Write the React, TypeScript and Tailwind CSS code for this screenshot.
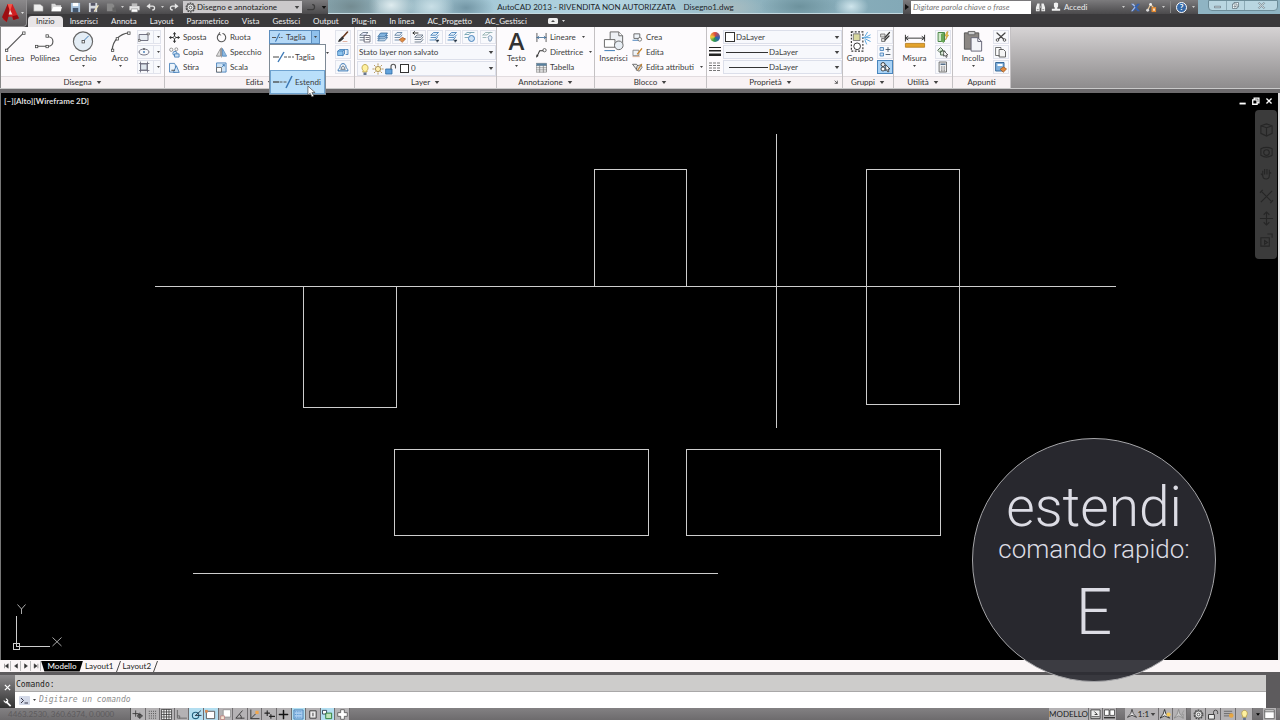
import type { ReactNode } from "react";

const P = ({ d, c = "#555", f = "none", w = 1 }: { d: string; c?: string; f?: string; w?: number }) => (
  <path d={d} stroke={c} fill={f} strokeWidth={w} strokeLinecap="round" strokeLinejoin="round" />
);

const B = "#3b78b5";
const L = "#cfe3f5";

const art: Record<string, ReactNode> = {
  rect: <><P d="M1.500 3.500h8.500v6H1.500z" c="#667" f="#e8edf2" w={0.9} /><P d="M.5 8.500h1.800v1.800H.5zM9.500 2h1.800v1.800H9.500z" f="#fff" w={0.7} /></>,
  ellipse: <><ellipse cx="6" cy="6" rx="5" ry="3" fill="none" stroke="#667" strokeWidth=".9" /><circle cx="6" cy="6" r=".9" fill={B} /><circle cx="6" cy="3" r=".9" fill="#555" /></>,
  hatch: <><P d="M3 3h6v6H3z" c="#667" f="#dfe6ee" w={0.8} /><P d="M1.500 2.500h9.500M1.500 9.500h9.500M2.500 1v10M9.500 1v10" c="#667" w={0.8} /></>,
  move: <><P d="M6 1v10M1 6h10" c="#333" w={1.1} /><path d="M6 0l1.900 2.400H4.100zM6 12l1.900-2.400H4.100zM0 6l2.400-1.900v3.800zM12 6L9.600 4.100v3.800z" fill="#333" /><path d="M4.800 4.800h2.400v2.400H4.800z" fill="#fff" stroke="#555" strokeWidth=".7" /></>,
  rotate: <><P d="M7.500 1.700A4.600 4.600 0 1 1 3.500 2.200" c="#555" w={1.2} /><P d="M4 .5l-.8 2 2 .8" c="#555" /></>,
  copy: <><circle cx="2.500" cy="3" r="1.800" fill="none" stroke="#777" strokeWidth=".8" /><circle cx="8" cy="2.500" r="1.600" fill="none" stroke="#777" strokeWidth=".8" /><circle cx="6.500" cy="7" r="2.300" fill={L} stroke={B} strokeWidth=".9" /><P d="M6.500 7.500h4.500V11H6.500z" c={B} f={L} w={0.9} /></>,
  mirror: <><P d="M5 2v8H.8z" c="#777" f="#ddd" w={0.8} /><P d="M7 2v8h4.200z" c={B} f="#8fb9e0" w={0.8} /><P d="M6 1v10" c="#555" w={0.6} /></>,
  stretch: <><P d="M1 1.500h5l1 2v7.500H1z" c={B} f="#eef5fc" w={0.9} /><P d="M5 11l3-7 3 7z" c={B} f={L} w={0.9} /><P d="M3 9h3" c="#444" /></>,
  scale: <><P d="M1 1h10v10H1z" c={B} f={L} w={0.9} /><P d="M1 6h5v5H1z" c="#666" f="#fff" w={0.9} /><P d="M7 5l2-2M7.500 3H9v1.500" c={B} /></>,
  trim: <><P d="M0 6h4" c="#555" w={1.2} /><P d="M4 10l4-8" c={B} w={1.2} /><path d="M7.500 6H12" stroke="#555" strokeDasharray="1.500 1" /></>,
  erase: <><P d="M10.500 1L5.500 6.500" c="#6a3a20" w={1.6} /><P d="M5.500 6l1 1.500-3 2.500-2 .5 1-2z" c="#222" f="#333" w={0.7} /><P d="M6 10.500h4" c="#d9a08a" w={0.8} /></>,
  explode: <><P d="M1 5h5v4.500H1zM1 5l1.500-1.500h5L6 5M7.500 3.500V8L6 9.500" c={B} f="#8cc4ee" w={0.8} /><P d="M8.500 3.500h2.500v5H9" c={B} f={L} w={0.8} /></>,
  offset: <><P d="M1 9.500c0-2 2-2 2-3.500 0-4.500 6-4.500 6 0 0 1.500 2 1.500 2 3.500z" c={B} w={1} /><P d="M4 8c1-1 .5-3 2-3s1 2 2 3z" c="#456" w={0.8} /></>,
  layers: <><P d="M1 4l3-2.500h5L6.500 4zM1 6.500h5.500M1 9h5" c="#567" f="#eef" w={0.8} /><P d="M5.500 4.500H11v6.500H5.500zM7 6.500h3M7 8.500h3" c="#556" f="#fff" w={0.8} /></>,
  layerStack: <><P d="M1 9.500l2.500-3h7L8 9.500z" c="#245c92" f="#dceaf6" w={0.7} /><P d="M1 7.500l2.500-3h7L8 7.500z" c="#245c92" f="#b6d4ee" w={0.7} /><P d="M1 5.500L3.500 2h7L8 5.500z" c="#245c92" f="#82b4df" w={0.7} /></>,
  layerMatch: <><P d="M1 4l2-2.500h5L6 4zM1 6.500h5L8 4M1 9h4" c="#579" f="#e6eef8" w={0.8} /><P d="M5.500 8.500l3-2 3 1.500-3 3z" c="#a5531f" f="#df8b3d" w={0.8} /></>,
  layerPrev: <><P d="M3 6l2-2h6L9 6zM3 8.500h6L11 6M3 11h6l2-2.500" c="#567" f="#f4f6fa" w={0.8} /><P d="M1 2h5M2.500.5L1 2l1.500 1.500" c="#222" w={0.9} /></>,
  layerIso: <><P d="M2 4l2.500-2.500h5L7 4zM2 6.500h5L9.500 4M1 9h5l2.500-2.500" c={B} f="#dcecfa" w={0.8} /><P d="M7 9h3l-1.500 2z" c="#234" f="#234" w={0.5} /></>,
  layerFreeze: <><P d="M1 3.500h4l2-2M1 6.500h3M1 3.500l2-2h7" c="#69a" w={0.8} /><circle cx="7.500" cy="7.500" r="3" fill={L} stroke={B} strokeWidth=".9" /></>,
  layerOff: <><P d="M1 4h4l3-2.500M1 4l2.500-2.500H10M1 6.500h3" c="#8aa" w={0.8} /><P d="M6 6.500a2 2 0 1 1 3.500 1.500L9 10H7L6.800 8z" c="#6788a8" f="#e8f1fa" w={0.8} /></>,
  linear: <><P d="M1 1.500v9M11 1.500v9" c="#555" /><P d="M1 6h10M3 4.500L1.500 6 3 7.500M9 4.500L10.500 6 9 7.500" c="#3c6a94" w={0.9} /></>,
  leader: <><P d="M1 10.500L4 4h3.500" c="#333" w={1.1} /><circle cx="9.300" cy="3.500" r="1.800" fill="none" stroke="#555" /><P d="M.5 11l.3-2.500 1.500.8z" c="#333" f="#333" w={0.4} /></>,
  table: <><P d="M.5 1.500h11v9.500H.5zM.5 4h11M.5 6.300h11M.5 8.600h11M4 4v7M8 4v7" c="#777" f="#fff" w={0.8} /><path d="M.5 1.500h11V4H.5z" fill="#59809f" /></>,
  blockNew: <><P d="M2.500 2h6v5h-6z" c="#555" f="#eef3f8" w={0.9} /><P d="M1 9h6" c={B} /><circle cx="8.500" cy="8" r="2" fill="#fff" stroke="#555" strokeWidth=".8" /></>,
  blockEdit: <><P d="M1.500 3.500h6v6h-6z" c="#777" f="#eef3f8" w={0.9} /><P d="M10.500 2L6 7.500" c="#c9842b" w={1.500} /><P d="M1 10.500h7" c="#c97" w={0.8} /></>,
  attrs: <><P d="M1 2.500h4l2 2.500-2 2.500z" c="#555" f="#eee" w={0.9} /><P d="M6 4l4-1 1 3-3 4-3-1z" c="#555" f="#ddd" w={0.8} /><P d="M10.500 2.500L6.500 8.500" c="#c9842b" w={1.300} /></>,
  weights: <path d="M0 1h12v1H0zM0 4h12v1.600H0zM0 7.500h12V10H0z" fill="#222" />,
  types: <path d="M0 2h12M0 4.500h12M0 7h12M0 9.500h12" stroke="#777" strokeDasharray="3 1" strokeWidth="1" />,
  ungroup: <><P d="M2 3h4v3H2zM3 7.500h3v3H3z" c="#666" f="#ddd" w={0.8} /><P d="M10.500 1.500L6 6.500M10 5L6 9" c="#333" w={1.200} /></>,
  groupEdit: <><P d="M1.500 1.500h3v3h-3zM1.500 7h3v3h-3z" c={B} f={L} w={0.8} /><P d="M7 3.500h4M9 1.500v4M7 8.500h4" c="#345" w={0.8} /></>,
  groupSel: <><circle cx="4" cy="3.500" r="2" fill="#eee" stroke="#222" strokeWidth=".8" /><circle cx="4" cy="8" r="2" fill="#fff" stroke="#222" strokeWidth=".8" /><P d="M7 4l4 4H9l1 2.500-1.200.5-1-2.500L7 9.500z" c="#222" f="#fff" w={0.7} /></>,
  quick: <><P d="M1.500 1.500h6v9h-6z" c="#3a7a35" f="#cfe8c8" w={0.9} /><path d="M4 3l3-1.500V12L4 10.500z" fill="#69a857" /><P d="M9.800 1L8 5h1.500l-1 4 3-5H10l1-3z" c="#b8892a" f="#f6d04b" w={0.6} /></>,
  selectSim: <><P d="M1 4l2.500-2.500L6 4 3.500 6.500zM4 5h4v4H4z" c="#456045" f="#dbe9d8" w={0.9} /><P d="M7 5l4 4H9.300l.8 2-1 .4-.8-2L7 10z" c="#333" f="#fff" w={0.7} /></>,
  calc: <><P d="M2.500 1h7v10h-7z" c="#666" f="#eee" w={0.9} /><path d="M3.500 2.500h5V4h-5z" fill="#556f8a" /><path d="M4 6h4M4 8h4M4 9.800h4" stroke="#777" strokeDasharray="1 .5" /></>,
  cut: <><P d="M2 2l6.500 6M10 2L3.500 8" c="#444" w={1.200} /><circle cx="2.500" cy="9" r="1.300" fill="none" stroke="#555" /><circle cx="9.500" cy="9" r="1.300" fill="none" stroke="#555" /></>,
  clip: <><P d="M1 1.500h5v8H1z" c="#555" f="#fff" w={0.8} /><P d="M4.500 3.500h4l2 2V11h-6z" c="#555" f="#f5f5f5" w={0.9} /></>,
  matchProp: <><P d="M1 1.500h8V10H1z" c="#2a5d91" f="#7fb0dc" w={0.9} /><path d="M2.500 3h5v2h-5z" fill="#fff" /><P d="M5.500 8l3-2 3 2-3 3z" c="#a3561b" f="#e3893a" w={0.8} /></>,
  bulb: <><P d="M4 7.500C2 5.500 3 1.500 6 1.500s4 4 2 6v1.500H4z" c="#b59a3c" f="#fff1a0" w={0.8} /><path d="M4.500 9.500h3V12h-3z" fill="#66758c" /></>,
  sun: <><circle cx="6" cy="6" r="2.600" fill="#fff1b0" stroke="#a58a4a" strokeWidth=".9" /><P d="M6 .8v1.400M6 9.800v1.400M.8 6h1.400M9.800 6h1.400M2.300 2.300l1 1M8.700 8.700l1 1M9.700 2.300l-1 1M2.300 9.700l1-1" c="#b09050" w={0.9} /></>,
  lock: <><P d="M1 6h6v5H1z" c="#2c6ba5" f="#63a3dc" w={0.8} /><P d="M6 6V3.500a2 2 0 0 1 4.500 0V5" c="#555" w={1.100} /></>,
  newFile: <path d="M.8 2.500h7l3.200 2.500v5H.8z" fill="#eee" stroke="#888" strokeWidth=".5" />,
  open: <><path d="M.5 2h4l1 1.500H11V10H.5z" fill="#d9d9d9" /><path d="M2.500 5.500H12L10.500 10H.5z" fill="#fff" /></>,
  save: <><path d="M1 1h10v10H1z" fill="#a9c3dc" /><path d="M3 1h6v3.500H3z" fill="#fff" /><path d="M3 6.500h6V11H3z" fill="#44566c" /></>,
  saveAs: <><path d="M1 1h9v10H1z" fill="#d5d9de" /><path d="M3 1h5v3H3zM3 7h5v4H3z" fill="#556" /><P d="M11 4L7 10" c="#f1e5bd" w={1.400} /></>,
  cloud: <><path d="M1 1.500h6l2 2V10H1z" fill="#888" /><path d="M7 6h4v5H7z" fill="#626262" /></>,
  print: <><path d="M.5 4.500h11v4.500H.5z" fill="#e6e6e6" /><path d="M3 1.500h6v3H3z" fill="#bbb" /><path d="M2.500 7.500h7V11h-7z" fill="#fff" stroke="#777" strokeWidth=".6" /></>,
  undo: <><P d="M3 5h5c3 0 3 4.500 0 4.500" c="#e6e6e6" w={1.600} /><path d="M5 1.500v7L.5 5z" fill="#e6e6e6" /></>,
  redo: <><P d="M9 5H4C1 5 1 9.500 4 9.500" c="#e6e6e6" w={1.600} /><path d="M7 1.500v7L11.500 5z" fill="#e6e6e6" /></>,
  gear: <><circle cx="6" cy="6" r="4.800" fill="none" stroke="#444" strokeWidth="1.200" strokeDasharray="1.900 1.100" /><circle cx="6" cy="6" r="3.800" fill="#eee" stroke="#444" strokeWidth=".9" /><circle cx="6" cy="6" r="1.500" fill="#fff" stroke="#444" strokeWidth=".9" /></>,
  binoc: <><path d="M1 10V6l1.500-4.500h2.500V10zM11 10V6L9.500 1.500H7V10z" fill="#eee" /><path d="M5 4h2v2.500H5zM2 7.500h2V9H2zM8 7.500h2V9H8z" fill="#999" /></>,
  person: <path d="M3.500 1.500q2.500-2 5 0v4L7.500 7v1h3.500v2.500H1V8h3.500V7l-1-1.500z" fill="#f1f1f1" />,
  exchange: <><path d="M0 1h3.500L6 4l2.500-3H12L8 6l4 5H8.500L6 8l-2.500 3H0l4-5z" fill="#3461b0" /><path d="M0 1h3.500l2 2.500L4 6 0 11h2l4-5z" fill="#a9bbe0" /></>,
  share: <><P d="M1.800 9L5 2.500 8 6" c="#e8c79a" w={1.300} /><circle cx="5" cy="2.500" r="1.500" fill="#f0f0f0" /><circle cx="1.800" cy="9" r="1.600" fill="#ddd" /><path d="M6 5.500h5V11H6z" fill="#e28a32" /><path d="M8 7h1.500v2.500H8z" fill="#fff" /></>,
  snap: <P d="M1 5h6M4 2v6M7 6h3v3H7zM8.500 4.500v6M6 7.500h6" c="#333" w={0.9} />,
  dots: <path d="M2 2.500h8M2 5h8M2 7.500h8M2 10h8" stroke="#444" strokeDasharray="1 1.300" />,
  grid: <><path d="M.5.500h11v11H.5z" fill="#eee" /><path d="M.5.500h11v11H.5zM3.200.5v11M6 .5v11M8.700.5v11M.5 3.200h11M.5 6h11M.5 8.700h11" fill="none" stroke="#333" strokeWidth=".8" /></>,
  ortho: <P d="M1.500 1.500v8.500h10M1.500 7.500H4V10" c="#666" />,
  polar: <><circle cx="5" cy="7" r="3.500" fill="none" stroke="#23617e" strokeWidth="1.200" /><P d="M5 7l5.500-5M5 7h6" c="#234" /></>,
  osnap: <><path d="M1.500 2.500h9v8h-9z" fill="#fff" stroke="#555" /><path d="M0 1h3v3H0z" fill="#d98c55" /></>,
  cube: <><path d="M3.500.8h8v8h-8z" fill="#fff" stroke="#888" strokeWidth=".8" /><path d="M.8 7.500h4v4h-4z" fill="#f6e7d5" stroke="#b77" strokeWidth=".8" /></>,
  angle: <P d="M9 2L2 10h9M6.500 6q2 1.500 1.500 4" c="#333" />,
  ducs: <><P d="M2 1v9.500h9M2 10.500l5-5" c="#333" /><path d="M7 2h3.500v3.500H7z" fill="#f1a64b" /></>,
  dyn: <P d="M1 4.500h5M3.500 2v5M6 8h5.500M7.500 6v4" c="#222" w={1.200} />,
  plus: <P d="M6 1.500v9M1.500 6h9" c="#111" w={1.600} />,
  transp: <><path d="M1 1h10v10H1z" fill="#a9cdf0" stroke="#2c69a5" strokeWidth=".8" /><path d="M2 3h8M2 6h8M2 9h8" stroke="#5996cf" strokeDasharray="1.500 1" /></>,
  qp: <><path d="M3 2h7v8H3z" fill="#eee" stroke="#333" strokeWidth="1" /><path d="M6 4h1v4H6z" fill="#333" /></>,
  cycle: <><P d="M1 1.500h4v4H1z" c="#345" f="#fff" /><P d="M4.500 4.500h6v6h-6z" c="#2a7b35" f="#bfe5ba" /></>,
  cross: <path d="M4 .8h4V4h3.200v4H8v3.200H4V8H.8V4H4z" fill="#fff" stroke="#555" strokeWidth=".9" />,
  modelIcon: <><path d="M1 1h10v9.500H1z" fill="#eee" stroke="#333" strokeWidth=".9" /><P d="M5 3l3 3H5.500M2 8.500h8" c="#333" /></>,
  qview: <><path d="M.5 1h5v6h-5zM6.500 1h5v6h-5z" fill="#fff" stroke="#333" strokeWidth=".8" /><path d="M0 9.500h12" stroke="#333" strokeWidth="1.500" /></>,
  anno: <path d="M6 .5l1.500 5 4 4.500-5.500-2.500L.5 10l4-4.500z" fill="#eee" stroke="#222" strokeWidth=".9" />,
  annoBulb: <><path d="M5 .5l1.500 5 4 4.500L5 7.500 0 10l3.500-4.500z" fill="#eee" stroke="#222" strokeWidth=".9" /><circle cx="9.300" cy="6" r="2.300" fill="#f5c959" /></>,
  annoAuto: <><path d="M5 .5l1.500 5 4 4.500L5 7.500 0 10l3.500-4.500z" fill="#ccc" stroke="#888" strokeWidth=".9" /><P d="M10.500 2L8.500 6h2l-1 4" c="#999" /></>,
  lockOpen: <><P d="M1 6h6v5H1z" c="#333" f="#eee" /><P d="M6 6V3.500a2 2 0 0 1 4.500 0V5" c="#444" /></>,
  hw: <><path d="M1 2.500h9M1 5h9M1 7.500h6" stroke="#666" /><circle cx="9" cy="7" r="2.500" fill="#e7a641" /></>,
  full: <path d="M.8 1h10.400v9.500H.8zM.8 3h10.400" fill="#fff" stroke="#666" />,
};

function Icon({ n, s = "size-3" }: { n: string; s?: string }) {
  return <svg viewBox="0 0 12 12" className={`${s} shrink-0`} aria-hidden="true">{art[n]}</svg>;
}

function Down({ c = "text-[#444]", s = "w-[6px] h-[3px]" }: { c?: string; s?: string }) {
  return <svg viewBox="0 0 6 4" className={`${s} ${c} shrink-0`} aria-hidden="true"><path d="M0 0h6L3 4z" fill="currentColor" /></svg>;
}
const TinyDown = ({ c = "text-[#444]" }: { c?: string }) => <Down s="w-[3px] h-[2px]" c={c} />;

function Panel({ title, w, children, arrow = true, launcher = false }: { title: string; w: string; children: ReactNode; arrow?: boolean; launcher?: boolean }) {
  return (
    <section className={`${w} flex shrink-0 flex-col border-r border-[#c4c1c3] bg-[#fdfbfd]`}>
      <div className="flex h-[49px] pt-[3px]">{children}</div>
      <div className="flex h-3 items-center border-t border-[#e2dcdf] bg-[#f8f2f4] pb-px">
        <button className="flex flex-1 items-center justify-center gap-1 text-[#333]">{title}{arrow && <Down />}</button>
        {launcher && <svg viewBox="0 0 6 6" className="mr-1 size-1"><path d="M1 1l4 4M5 1v4H1" stroke="#222" fill="none" /></svg>}
      </div>
    </section>
  );
}

function Big({ label, w, arrow = false, children }: { label: string; w: string; arrow?: boolean; children: ReactNode }) {
  return (
    <button className={`${w} flex shrink-0 flex-col items-center`}>
      <svg viewBox="0 0 24 24" className="h-[23px] w-6" aria-hidden="true">{children}</svg>
      <span className="h-[11px] leading-[11px]">{label}</span>
      {arrow && <span className="flex h-1 items-center"><TinyDown /></span>}
    </button>
  );
}

function Row({ n, label, arrow = false }: { n: string; label: string; arrow?: boolean }) {
  return (
    <button className="flex h-[15px] items-center gap-[3px] whitespace-nowrap pb-px">
      <Icon n={n} s="size-[11px]" />
      <span>{label}</span>
      {arrow && <span className="ml-[3px]"><TinyDown /></span>}
    </button>
  );
}

function Boxed({ n, label, on = false, arrow = false }: { n: string; label: string; on?: boolean; arrow?: boolean }) {
  return (
    <button aria-label={label} className={`flex h-[14px] items-center justify-center border ${arrow ? "w-6 gap-[3px]" : "w-4"} ${on ? "border-[#4a86bd] bg-[#a9d3f6]" : "border-[#e1e3ec] bg-[#f8f9fc]"}`}>
      <Icon n={n} />
      {arrow && <span className="flex h-full items-center border-l border-[#e1e3ec] pl-[3px]"><TinyDown /></span>}
    </button>
  );
}

function Combo({ label, value, pad, children }: { label: string; value: string; pad: string; children?: ReactNode }) {
  return (
    <div className="relative flex h-[14px] flex-1 items-center border border-[#dcdfea] bg-[#f7f8fc]">
      <select aria-label={label} className={`h-full w-full appearance-none bg-transparent ${pad} pb-px outline-none`}><option>{value}</option></select>
      <span className="pointer-events-none absolute inset-y-0 left-px flex items-center">{children}</span>
      <span className="pointer-events-none absolute inset-y-0 right-px flex items-center"><Down /></span>
    </div>
  );
}

function TitleBar() {
  const qat = ["newFile", "open", "save", "saveAs", "cloud"];
  const names = ["Nuovo", "Apri", "Salva", "Salva con nome", "Cloud"];
  return (
    <div className="flex h-[14px] items-stretch bg-[#8fb4c3]">
      <div className="flex w-[301px] shrink-0 items-center bg-linear-to-b from-[#7c7b7d] to-[#4b4a4c]">
        <div className="flex w-[90px] items-center justify-between pl-[6px]">
          {qat.map((q, i) => <button key={q} aria-label={names[i]}><Icon n={q} s="size-[11px]" /></button>)}
        </div>
        <div className="flex w-[64px] items-center justify-between pl-1 pr-[2px]">
          <TinyDown c="text-[#ccc]" />
          <button aria-label="Stampa"><Icon n="print" s="size-[11px]" /></button>
          <button aria-label="Annulla"><Icon n="undo" s="size-[10px]" /></button>
          <TinyDown c="text-[#ccc]" />
          <button aria-label="Ripeti"><Icon n="redo" s="size-[10px]" /></button>
        </div>
        <div className="relative ml-[2px] flex h-3 w-[119px] items-center bg-[#cbc9cb]">
          <span className="pointer-events-none absolute left-[2px]"><Icon n="gear" s="size-[11px]" /></span>
          <select aria-label="Area di lavoro" className="w-full appearance-none bg-transparent pl-[14px] text-[#222]"><option>Disegno e annotazione</option></select>
          <span className="pointer-events-none absolute right-[2px]"><Down /></span>
        </div>
        <svg viewBox="0 0 12 12" className="ml-1 size-[10px]"><P d="M2 9h6c3 0 3-6 0-6" c="#3b3b3b" w={1.500} /></svg>
        <span className="ml-[5px]"><Down c="text-[#111]" /></span>
      </div>
      <div className="flex min-w-0 flex-1 items-center justify-center overflow-hidden border-b border-[#c3d9e0] bg-[radial-gradient(ellipse_5%_120%_at_4%_50%,#738b91,transparent),radial-gradient(ellipse_4%_120%_at_11%_40%,#dfecef,transparent),radial-gradient(ellipse_4%_120%_at_18%_50%,#c9dfe6,transparent),radial-gradient(ellipse_5%_120%_at_24%_60%,#7396a5,transparent),radial-gradient(ellipse_6%_110%_at_70%_60%,#a9bcc0,transparent),radial-gradient(ellipse_7%_120%_at_82%_50%,#6d929d,transparent),radial-gradient(ellipse_3%_90%_at_91%_50%,#cfe5ec,transparent),linear-gradient(90deg,#86a3ac,#a6cad8_28%,#b4d5e2_50%,#8eb2be_75%,#83a9b7)] whitespace-pre text-[#1d2529]">
        AutoCAD 2013 - RIVENDITA NON AUTORIZZATA    Disegno1.dwg
      </div>
      <div className="flex w-[295px] shrink-0 items-center bg-linear-to-b from-[#7c7b7d] to-[#4b4a4c] text-[#eee]">
        <button aria-label="Espandi" className="flex w-2 justify-center"><svg viewBox="0 0 4 6" className="h-[6px] w-1"><path d="M0 0l4 3-4 3z" fill="#111" /></svg></button>
        <input aria-label="Ricerca" placeholder="Digitare parola chiave o frase" className="h-[13px] w-[120px] bg-white px-[2px] italic outline-none placeholder:text-[#777]" />
        <button aria-label="Cerca" className="ml-1"><Icon n="binoc" s="size-[11px]" /></button>
        <button className="ml-[5px] flex items-center gap-[3px]"><Icon n="person" s="size-[10px]" />Accedi</button>
        <div className="ml-auto flex items-center gap-[5px] pr-[3px]">
          <TinyDown c="text-[#ccc]" />
          <button aria-label="Exchange" className="px-px"><Icon n="exchange" s="size-[9px]" /></button>
          <button aria-label="Condividi"><Icon n="share" s="size-[11px]" /></button>
          <TinyDown c="text-[#ccc]" />
          <span className="h-3 w-px bg-[#888]" />
          <button aria-label="Guida" className="flex size-[11px] items-center justify-center rounded-full border border-white bg-[#3569a8] font-bold text-white">?</button>
          <TinyDown c="text-[#ccc]" />
        </div>
      </div>
      <div className="flex w-[82px] shrink-0 items-start justify-end pr-[2px]">
        <div className="flex h-[11px] w-[70px] rounded-b border border-[#6d8d99] bg-[#b9d6e1]">
          {["M2 7h8v2H2z", "M2 4h6v6H2zM4 4V2h6v6H8M4 6.500h2v1.500H4z", "M3 2l3 3 3-3 1 1-3 3 3 3-1 1-3-3-3 3-1-1 3-3-3-3z"].map((d, i) => (
            <button key={d} aria-label={["Riduci a icona", "Ripristina", "Chiudi"][i]} className={`flex items-center justify-center ${i === 2 ? "w-8" : "flex-1 border-r border-[#8ba9b5]"}`}>
              <svg viewBox="0 0 12 12" className="size-[9px]"><path d={d} fill="#f5fafc" stroke="#536670" strokeWidth=".9" /></svg>
            </button>
          ))}
        </div>
      </div>
    </div>
  );
}

const tabs = ["Inizio", "Inserisci", "Annota", "Layout", "Parametrico", "Vista", "Gestisci", "Output", "Plug-in", "In linea", "AC_Progetto", "AC_Gestisci"];

function Header() {
  return (
    <header className="flex bg-[#3a393b]">
      <button aria-label="Menu applicazione" className="flex h-[27px] w-[27px] shrink-0 items-center gap-[2px] rounded-br border-b border-r border-[#939193] bg-linear-to-b from-[#8b898b] to-[#5b595b] pl-[2px]">
        <svg viewBox="0 0 18 22" className="h-[21px] w-[17px]">
          <path d="M6 1h5l7 15-6 2-1.500-3.500H6.500L5 20l-4-3z" fill="#d01f22" />
          <path d="M6 1L0 15l5 5 3.500-11z" fill="#9c0e12" />
          <path d="M6 1h5l-2.500 8z" fill="#f4574a" />
          <path d="M8.500 7l2.500 5H7z" fill="#f6d9d6" />
          <path d="M12 18l6-2-2-3.500-5 1.500z" fill="#8f0b10" />
        </svg>
        <TinyDown c="text-[#ddd]" />
      </button>
      <div className="min-w-0 flex-1">
        <TitleBar />
        <nav className="flex h-[13px] items-end gap-px text-[#f0f0f0]">
          {tabs.map((t, i) => (
            <button key={t} className={i === 0 ? "ml-px h-[11px] rounded-t-sm bg-[#e8e5e7] px-2 leading-[11px] text-[#333]" : "h-[12px] px-[6px] leading-[11px]"}>{t}</button>
          ))}
          <button aria-label="Riduci barra" className="ml-[14px] flex h-3 items-center gap-1">
            <svg viewBox="0 0 10 6" className="h-[6px] w-[10px]"><rect width="10" height="6" rx="1.500" fill="#eee" /><path d="M3 4l2-2 2 2z" fill="#444" /></svg>
            <TinyDown c="text-[#ddd]" />
          </button>
        </nav>
      </div>
    </header>
  );
}

function TrimMenu() {
  return (
    <div className="relative h-[14px] w-[51px]">
      <div className="flex h-[14px] border border-[#5c8dbd] bg-[#b5d9f7]">
        <button className="flex flex-1 items-center gap-[3px] pl-[2px]"><Icon n="trim" s="size-[11px]" />Taglia</button>
        <button aria-label="Altre opzioni" className="flex w-2 items-center justify-center border-l border-[#5c8dbd] bg-[#8fc1ec]"><TinyDown /></button>
      </div>
      <div role="menu" className="absolute left-0 top-[14px] z-20 w-[57px] border border-[#7e8a96] bg-white">
        <button role="menuitem" className="flex h-[25px] w-full items-center gap-px pb-px pl-[2px]">
          <svg viewBox="0 0 22 16" className="h-4 w-[22px]"><path d="M1 8h6" stroke="#444" /><path d="M6 13L12 3" stroke={B} strokeWidth="1.400" /><path d="M12 8h10" stroke="#555" strokeDasharray="3 1" /></svg>Taglia
        </button>
        <button role="menuitem" className="flex h-6 w-full items-center gap-px border border-[#6fa3d0] bg-[#b9dffa] pl-px">
          <svg viewBox="0 0 22 16" className="h-4 w-[22px]"><path d="M1 8h6" stroke="#444" strokeWidth="1.300" /><path d="M7.500 8H15" stroke="#555" strokeDasharray="3 1" /><path d="M14 14L20 2" stroke={B} strokeWidth="1.600" /></svg>Estendi
        </button>
        <svg viewBox="0 0 10 14" className="absolute left-[37px] top-[40px] h-[13px] w-[9px]"><path d="M1 1v10l2.500-2 2 4 2-1-2-3.800H9z" fill="#fff" stroke="#444" strokeWidth=".8" /></svg>
      </div>
    </div>
  );
}

function Ribbon() {
  const sq = (x: number, y: number) => <rect x={x - 1} y={y - 1} width="2.500" height="2.500" fill="#fff" stroke="#444" strokeWidth=".8" />;
  return (
    <div className="flex h-[61px] border-l border-[#888] bg-linear-to-b from-[#d6d3d4] to-[#8e8c8d]">
      <Panel title="Disegna" w="w-[164px]">
        <Big label="Linea" w="w-7"><path d="M3 21L21 3" stroke="#555" strokeWidth="1.200" />{sq(3, 21)}{sq(21, 3)}</Big>
        <Big label="Polilinea" w="w-8"><path d="M3 17h12c7 0 7-10 0-10h-1" fill="none" stroke="#555" strokeWidth="1.200" />{sq(3, 17)}{sq(14, 17)}{sq(14, 6)}</Big>
        <Big label="Cerchio" w="w-11" arrow><circle cx="12" cy="12" r="10" fill="#e4edf5" stroke="#666" strokeWidth="1.200" /><path d="M12 12l6-6" stroke={B} />{sq(12, 12)}</Big>
        <Big label="Arco" w="w-[30px]" arrow><path d="M4 21C4 11 12 4 21 3" fill="none" stroke="#555" strokeWidth="1.200" />{sq(4, 21)}{sq(21, 3)}{sq(9, 9)}</Big>
        <div className="ml-[2px] flex flex-col gap-px">
          <Boxed n="rect" label="Rettangolo" arrow /><Boxed n="ellipse" label="Ellisse" arrow /><Boxed n="hatch" label="Tratteggio" arrow />
        </div>
      </Panel>
      <Panel title="Edita" w="w-[190px]">
        <div className="ml-1 w-[47px]"><Row n="move" label="Sposta" /><Row n="copy" label="Copia" /><Row n="stretch" label="Stira" /></div>
        <div className="w-[53px]"><Row n="rotate" label="Ruota" /><Row n="mirror" label="Specchio" /><Row n="scale" label="Scala" /></div>
        <TrimMenu />
        <div className="ml-[6px] flex h-[45px] flex-col justify-around py-4"><TinyDown /></div>
        <div className="ml-[6px] flex flex-col gap-px"><Boxed n="erase" label="Cancella" /><Boxed n="explode" label="Esplodi" /><Boxed n="offset" label="Offset" /></div>
      </Panel>
      <Panel title="Layer" w="w-[142px]">
        <div className="flex flex-1 flex-col gap-px pl-[2px]">
          <div className="flex justify-between">
            {["layers", "layerStack", "layerMatch", "layerPrev", "layerIso", "layerIso", "layerFreeze", "layerOff"].map((n, i) => <Boxed key={i} n={n} label={`Layer ${n}`} />)}
          </div>
          <Combo label="Stato layer" value="Stato layer non salvato" pad="pl-[1px]" />
          <Combo label="Layer corrente" value="0" pad="pl-[53px]">
            <span className="flex items-center gap-px"><Icon n="bulb" /><Icon n="sun" /><Icon n="lock" /><span className="ml-[2px] size-[9px] border border-[#333] bg-white" /></span>
          </Combo>
        </div>
      </Panel>
      <Panel title="Annotazione" w="w-[98px]">
        <button className="flex w-[39px] flex-col items-center">
          <span className="h-[23px] font-['Open_Sans',sans-serif] text-[24px] font-semibold leading-[22px] text-[#333]">A</span>
          <span className="h-[11px] leading-[11px]">Testo</span>
          <span className="flex h-1 items-center"><TinyDown /></span>
        </button>
        <div><Row n="linear" label="Lineare" arrow /><Row n="leader" label="Direttrice" arrow /><Row n="table" label="Tabella" /></div>
      </Panel>
      <Panel title="Blocco" w="w-[112px]">
        <Big label="Inserisci" w="w-[37px]"><path d="M8 2h9l4 4v8H8z" fill="#eef1f5" stroke="#666" /><path d="M17 2v4h4M2 10h11v8H2z" fill="#fff" stroke="#666" /><circle cx="17" cy="16" r="4.500" fill="#e8eef4" stroke="#666" /><path d="M2 21.500h11" fill="none" stroke={B} /></Big>
        <div><Row n="blockNew" label="Crea" /><Row n="blockEdit" label="Edita" /><Row n="attrs" label="Edita attributi" arrow /></div>
      </Panel>
      <Panel title="Proprietà" w="w-[136px]" launcher>
        <div className="flex flex-1 flex-col gap-px pl-[2px]">
          <div className="flex items-center gap-[2px]">
            <span className="m-px size-[10px] shrink-0 rounded-full bg-[conic-gradient(#e0483b,#2c61b8_30%,#2e9a4c_55%,#f2cf3c_75%,#e0483b)]" />
            <Combo label="Colore" value="DaLayer" pad="pl-[12px]"><span className="size-[10px] border border-[#333] bg-white" /></Combo>
          </div>
          <div className="flex items-center gap-[2px]"><Icon n="weights" /><Combo label="Spessore linea" value="DaLayer" pad="pl-[45px]"><span className="ml-px h-px w-[42px] bg-[#333]" /></Combo></div>
          <div className="flex items-center gap-[2px]"><Icon n="types" /><Combo label="Tipo di linea" value="DaLayer" pad="pl-[45px]"><span className="ml-1 h-px w-[39px] bg-[#333]" /></Combo></div>
        </div>
      </Panel>
      <Panel title="Gruppi" w="w-[51px]">
        <Big label="Gruppo" w="w-[34px]"><path d="M3 2h12v20H3z" fill="none" stroke="#333" strokeWidth="1.200" strokeDasharray="2 1.500" /><path d="M5 4h7v7H5z" fill="#d8d89e" stroke="#777" /><circle cx="9" cy="17" r="3.500" fill="#fff" stroke="#333" /><path d="M17 8l6-3M17 9l6 3M17 7l3-5M17 10l2 5M14 8h9" stroke="#58a5dc" /></Big>
        <div className="flex flex-col gap-px"><Boxed n="ungroup" label="Separa" /><Boxed n="groupEdit" label="Modifica gruppo" /><Boxed n="groupSel" label="Selezione gruppo" on /></div>
      </Panel>
      <Panel title="Utilità" w="w-[59px]">
        <Big label="Misura" w="w-[41px]" arrow><path d="M2 5v7M22 5v7M2 8.500h20M5 6.500l-3 2 3 2M19 6.500l3 2-3 2" fill="none" stroke="#333" /><path d="M2 14h20v4H2z" fill="#e3a22b" stroke="#b07716" strokeWidth=".8" /></Big>
        <div className="flex flex-col gap-px"><Boxed n="quick" label="Selezione rapida" /><Boxed n="selectSim" label="Seleziona tutto" /><Boxed n="calc" label="Calcolatrice" /></div>
      </Panel>
      <Panel title="Appunti" w="w-[58px]" arrow={false}>
        <Big label="Incolla" w="w-10" arrow><path d="M3 3h15v17H3z" fill="#8b8783" stroke="#555" /><path d="M7 1.500h7V5H7z" fill="#ccc" stroke="#666" /><path d="M10 8h7l4 4v10H10z" fill="#f3f4f8" stroke="#667" /><path d="M17 8v4h4" fill="none" stroke="#667" /></Big>
        <div className="flex flex-col gap-px"><Boxed n="cut" label="Taglia negli appunti" /><Boxed n="clip" label="Copia negli appunti" /><Boxed n="matchProp" label="Corrispondenza proprietà" /></div>
      </Panel>
    </div>
  );
}

function Canvas() {
  return (
    <main className="relative flex flex-1 border-l border-r-2 border-l-[#777] border-r-[#ddd] bg-black">
      <svg viewBox="1 93 1277 567" preserveAspectRatio="xMinYMin meet" className="w-full" role="img" aria-label="Disegno">
        <g fill="none" stroke="#cdcdcd" strokeWidth="1" shapeRendering="crispEdges">
          <path d="M154.500 286.500H1116M776.500 133.500V428M192.500 573.500H718" />
          <path d="M594.500 286.500V169.500H686.500V286.500M303.500 286.500V407.500H396.500V286.500" />
          <path d="M866.500 169.500H959.500V404.500H866.500zM394.500 449.500H648.500V535.500H394.500zM686.500 449.500H940.500V535.500H686.500z" />
          <path d="M16.500 616V643M20 646.500H50M13.500 643.500h6v6h-6zM16.500 643v3.500h3" />
        </g>
        <g stroke="#a9a9a9" strokeWidth="1" fill="none">
          <path d="M17.500 604.500l4 4.500 4-4.500M21.500 609v5" />
          <path d="M52.500 637.500l9 8.500M61.500 637.500l-9 8.500" />
        </g>
      </svg>
      <div className="absolute left-[3px] top-[3px] font-bold text-[#ddd]">[−][Alto][Wireframe 2D]</div>
      <div className="absolute right-[5px] top-1 flex gap-[5px]">
        {["M1 8h8v2H1z", "M1 4h6v6H1zM3 4V1.500h6.500V8H7", "M2 2l7 7M9 2L2 9"].map((d, i) => (
          <button key={d} aria-label={["Riduci disegno", "Ripristina disegno", "Chiudi disegno"][i]}>
            <svg viewBox="0 0 11 11" className="size-2"><path d={d} fill={i === 0 ? "#fff" : "none"} stroke="#fff" strokeWidth={i === 0 ? 0.5 : 1.8} /></svg>
          </button>
        ))}
      </div>
      <nav aria-label="Barra di navigazione" className="absolute right-px top-[17px] flex h-[149px] w-[22px] flex-col items-center gap-[5px] rounded-sm bg-[#3b3b3b] pt-3">
        {[
          <g key="a"><path d="M2 3l6-2 6 2v8l-6 3-6-3zM2 3l6 2 6-2M8 5v9" /></g>,
          <g key="b"><path d="M2 4q6-3 12 0v7q-6 4-12 0z" /><circle cx="8" cy="8" r="3" /></g>,
          <g key="c"><path d="M4 9V4M6 8V2M8.500 8V2M11 8V3M4 9L2 7M4 9c0 5 7 5 7 0V7l2-1" /></g>,
          <g key="d"><path d="M2 2l12 12M14 2L2 14M1 4l3-3M12 15l3-3" /></g>,
          <g key="e"><path d="M8 1v14M1 8h14M5 4l3-3 3 3M5 12l3 3 3-3" /></g>,
          <g key="f"><path d="M2 5h9v9H2zM6 8l3 2-3 2zM9 1h5v4" /></g>,
        ].map((g, i) => (
          <button key={i} aria-label={["ViewCube", "Ruota di navigazione", "Pan", "Zoom", "Orbita", "ShowMotion"][i]} className="flex h-[17px] items-center">
            <svg viewBox="0 0 16 16" className="size-[15px]" fill="none" stroke="#262626" strokeWidth="1.200">{g}</svg>
          </button>
        ))}
      </nav>
    </main>
  );
}

const Slash = () => <svg viewBox="0 0 5 11" className="h-[11px] w-[5px]" aria-hidden="true"><path d="M.5 11L4.500 0" stroke="#333" strokeWidth=".9" /></svg>;

function LayoutTabs() {
  return (
    <div className="flex h-3 items-center bg-[#fbf6f7] pl-px text-[#222]">
      {["M2 1v6M7 1L3 4l4 3z", "M6 1L2 4l4 3z", "M2 1l4 3-4 3z", "M6.500 1v6M1.500 1l4 3-4 3z"].map((d, i) => (
        <button key={d} aria-label={["Primo", "Precedente", "Successivo", "Ultimo"][i]} className="flex h-[10px] w-[10px] items-center justify-center border-r border-[#bbb]">
          <svg viewBox="0 0 8 8" className="size-[6px]"><path d={d} fill="#333" stroke="#333" strokeWidth=".6" /></svg>
        </button>
      ))}
      <button className="h-[11px] w-[42px] bg-black text-center leading-[11px] text-white [clip-path:polygon(0_0,100%_0,92%_100%,8%_100%)]">Modello</button>
      <button className="h-[11px] px-[2px] leading-[11px]">Layout1</button><Slash />
      <button className="h-[11px] px-[2px] leading-[11px]">Layout2</button><Slash />
    </div>
  );
}

function CommandLine() {
  return (
    <div className="flex border-t-[3px] border-[#5d5b5d] bg-[#5d5b5d] font-['DejaVu_Sans_Mono','Liberation_Mono',monospace]">
      <div className="flex w-[15px] flex-col items-center justify-between bg-linear-to-b from-[#8b898b] to-[#333] pb-px pt-[9px]">
        <button aria-label="Chiudi riga di comando"><svg viewBox="0 0 8 8" className="size-[7px]"><path d="M1 1l6 6M7 1L1 7" stroke="#fff" strokeWidth="1.500" /></svg></button>
        <button aria-label="Personalizza"><svg viewBox="0 0 10 10" className="size-[9px]"><path d="M3.500 4l5 5" stroke="#fff" strokeWidth="1.800" /><path d="M1 3l2 1.500L5 3 3.500.8A3 3 0 0 1 5 5 3 3 0 0 1 1 3z" fill="#fff" stroke="#fff" /></svg></button>
      </div>
      <div className="mr-[14px] flex min-w-0 flex-1 flex-col">
        <div className="flex h-[17px] items-end border-b border-[#a9a8a8] bg-[#cdcccb] px-px text-[#222]"><span className="leading-3">Comando:</span></div>
        <label className="flex h-4 items-center gap-[3px] bg-white px-1">
          <svg viewBox="0 0 11 9" className="h-[9px] w-[11px]"><rect width="11" height="9" rx="1" fill="#d3d9e8" /><path d="M2 2l2.500 2.500L2 7M5.500 7H9" stroke="#334" fill="none" /></svg>
          <TinyDown />
          <input aria-label="Comando" placeholder="Digitare un comando" className="min-w-0 flex-1 italic outline-none placeholder:text-[#8d8d8d]" />
        </label>
      </div>
    </div>
  );
}

function StatusButton({ n, label, on = false, w = "flex-1" }: { n: string; label: string; on?: boolean; w?: string }) {
  return (
    <button aria-label={label} className={`${w} flex h-3 items-center justify-center border-r border-[#6f6d6f] ${on ? "bg-[#b3def0]" : "bg-[#b4b2b4]"}`}><Icon n={n} s="size-[11px]" /></button>
  );
}

function StatusBar() {
  const left: [string, string, boolean][] = [
    ["snap", "Vincoli", false], ["dots", "Snap", false], ["grid", "Griglia", false], ["ortho", "Orto", false], ["polar", "Polare", true],
    ["osnap", "Osnap", true], ["cube", "Osnap 3D", false], ["angle", "Puntamento", false], ["ducs", "UCS dinamico", false], ["dyn", "Input dinamico", false],
    ["plus", "Spessore", false], ["transp", "Trasparenza", true], ["qp", "Proprietà rapide", false], ["cycle", "Selezione ciclica", true], ["cross", "Monitor", false],
  ];
  return (
    <footer className="flex h-3 items-center bg-linear-to-b from-[#838183] to-[#6d6b6d] text-[#222]">
      <span className="w-[130px] pl-2 text-[#5d5b5d]">4463.2530, 360.6374, 0.0000</span>
      <div className="flex w-[220px] border-l border-[#555]">
        {left.map(([n, label, on]) => <StatusButton key={n} n={n} label={label} on={on} />)}
      </div>
      <div className="ml-auto flex items-center pr-[3px]">
        <button className="h-3 w-10 border-r border-[#6f6d6f] bg-[#b4b2b4] leading-3">MODELLO</button>
        <StatusButton n="modelIcon" label="Modello" w="w-[14px]" />
        <StatusButton n="qview" label="Vista rapida" w="w-[14px]" />
        <button className="ml-2 flex h-3 w-[34px] items-center justify-center gap-px border-r border-[#6f6d6f] bg-[#b4b2b4]"><Icon n="anno" s="size-[10px]" />1:1<Down /></button>
        <StatusButton n="annoBulb" label="Visibilità annotazioni" w="w-[14px]" />
        <StatusButton n="annoAuto" label="Scala automatica" w="w-[14px]" />
        <span className="w-1" />
        <StatusButton n="gear" label="Area di lavoro" w="w-[15px]" />
        <StatusButton n="lockOpen" label="Blocca" w="w-[15px]" />
        <StatusButton n="hw" label="Accelerazione hardware" w="w-[15px]" />
        <StatusButton n="bulb" label="Isola oggetti" w="w-[17px]" />
        <span className="flex h-3 w-[10px] items-center justify-center"><Down c="text-black" s="w-1 h-[3px]" /></span>
        <StatusButton n="full" label="Schermo intero" w="w-[14px]" />
      </div>
    </footer>
  );
}

export default function App() {
  return (
    <div className="relative flex min-h-screen flex-col overflow-hidden bg-[#5d5b5d] font-['Lato','Open_Sans',sans-serif] text-[8px] leading-[10px] text-[#3c3c3c]">
      <Header />
      <Ribbon />
      <div className="h-[5px] border-t border-[#c9c9c9] bg-[#6d6b6d]" />
      <Canvas />
      <LayoutTabs />
      <CommandLine />
      <StatusBar />
      <aside className="absolute bottom-[38px] right-[64px] flex size-[244px] flex-col items-center rounded-full border border-[#a5a5a8] bg-[#2b2b32]/92 pt-[40px] font-['Roboto',sans-serif] font-light text-[#dcdce4]">
        <p className="text-[55px] leading-[56px]">estendi</p>
        <p className="text-[26px] leading-[28px]">comando rapido:</p>
        <p className="mt-[14px] text-[64px] leading-[72px]">E</p>
      </aside>
    </div>
  );
}
